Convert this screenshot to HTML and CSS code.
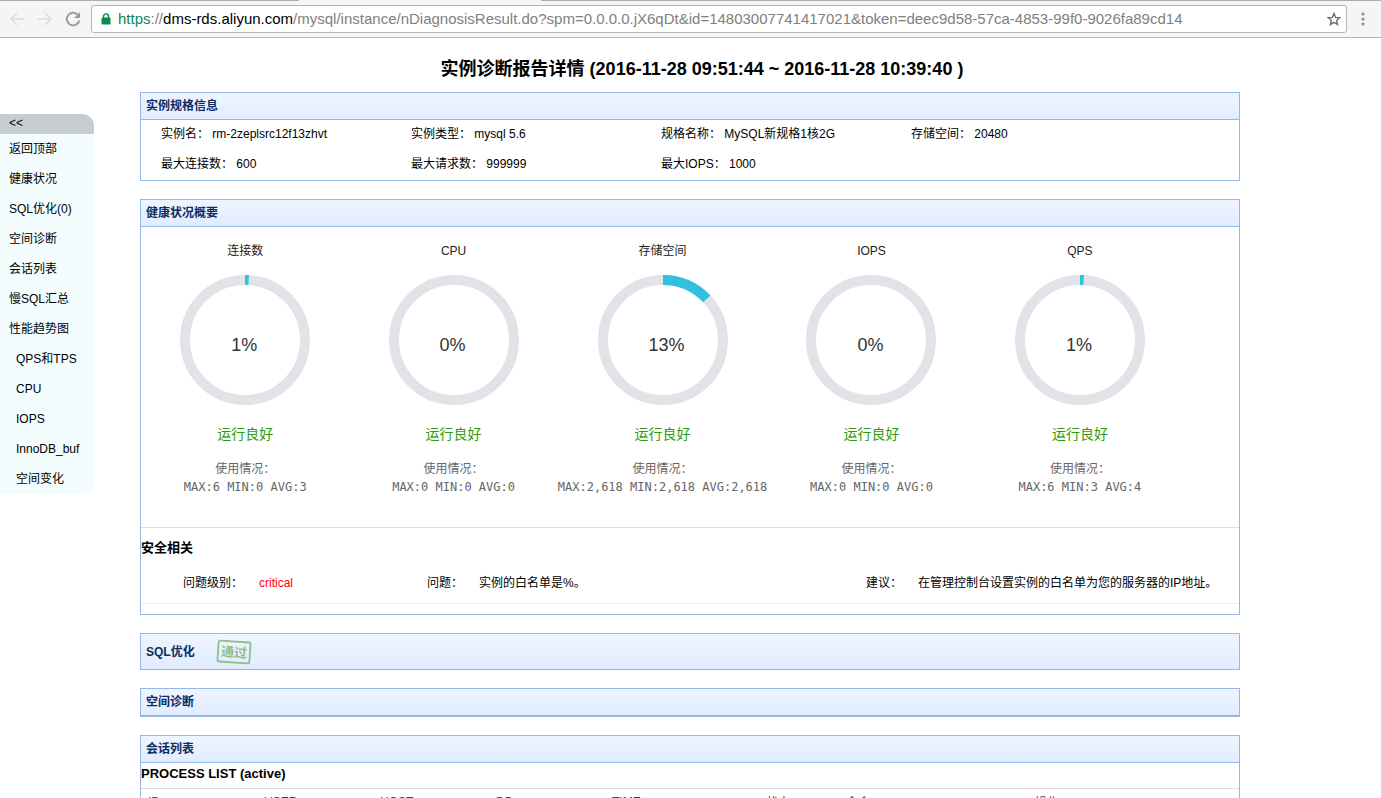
FILE: index.html
```html
<!DOCTYPE html>
<html lang="zh-CN">
<head>
<meta charset="utf-8">
<title>实例诊断报告详情</title>
<link rel="stylesheet" href="styles.css">
</head>
<body>
<div class="window">
  <header class="toolbar">
    <button class="tool" aria-label="后退"><svg width="16" height="16" viewBox="0 0 16 16" fill="none" stroke="#dcdcdc" stroke-width="1.600"><path d="M15 8H2.500M8 2L2 8l6 6"/></svg></button>
    <button class="tool" aria-label="前进"><svg width="16" height="16" viewBox="0 0 16 16" fill="none" stroke="#dcdcdc" stroke-width="1.600"><path d="M1 8h12.500M8 2l6 6-6 6"/></svg></button>
    <button class="tool" aria-label="刷新"><svg width="16" height="16" viewBox="0 0 16 16" fill="none" stroke="#9c9c9c" stroke-width="2"><path d="M14.300 9.500A6.300 6.300 0 1 1 12.600 3.600"/><path d="M15 1v6H9z" fill="#9c9c9c" stroke="none"/></svg></button>
    <div class="address">
      <svg width="10" height="12" viewBox="0 0 10 12"><rect x="0.500" y="4.500" width="9" height="7" rx="1" fill="#0b8a50"/><path d="M2.500 5V3.400a2.500 2.500 0 0 1 5 0V5" fill="none" stroke="#0b8a50" stroke-width="1.400"/></svg>
      <div class="url" role="textbox" aria-label="地址" contenteditable="true" spellcheck="false"><span class="scheme">https</span>://<span class="host">dms-rds.aliyun.com</span>/mysql/instance/nDiagnosisResult.do?spm=0.0.0.0.jX6qDt&amp;id=14803007741417021&amp;token=deec9d58-57ca-4853-99f0-9026fa89cd14</div>
      <button class="star" aria-label="收藏"><svg width="14" height="14" viewBox="0 0 14 14" fill="none" stroke="#6e6e6e" stroke-width="1.400"><path d="M7 1.500l1.600 3.900 4.200.3-3.200 2.700 1 4.100L7 10.300l-3.600 2.200 1-4.100L1.200 5.700l4.200-.3z"/></svg></button>
    </div>
    <button class="more" aria-label="菜单"><svg width="4" height="14" viewBox="0 0 4 14" fill="#8f8f8f"><circle cx="2" cy="2" r="1.600"/><circle cx="2" cy="7" r="1.600"/><circle cx="2" cy="12" r="1.600"/></svg></button>
  </header>
  <div class="page">
    <div class="side">
      <nav class="menu">
        <button class="collapse">&lt;&lt;</button>
        <ul class="links">
          <li><a href="#top">返回顶部</a></li>
          <li><a href="#health">健康状况</a></li>
          <li><a href="#sql">SQL优化(0)</a></li>
          <li><a href="#space">空间诊断</a></li>
          <li><a href="#session">会话列表</a></li>
          <li><a href="#slow">慢SQL汇总</a></li>
          <li><a href="#trend">性能趋势图</a></li>
          <li class="sub"><a href="#qps">QPS和TPS</a></li>
          <li class="sub"><a href="#cpu">CPU</a></li>
          <li class="sub"><a href="#iops">IOPS</a></li>
          <li class="sub"><a href="#buf">InnoDB_buf</a></li>
          <li class="sub"><a href="#change">空间变化</a></li>
        </ul>
      </nav>
    </div>
    <main class="report" id="top">
      <h1 class="title">实例诊断报告详情 (2016-11-28 09:51:44 ~ 2016-11-28 10:39:40 )</h1>

      <section class="panel">
        <h2 class="head">实例规格信息</h2>
        <div class="specs">
          <p>实例名： rm-2zeplsrc12f13zhvt</p>
          <p>实例类型： mysql 5.6</p>
          <p>规格名称： MySQL新规格1核2G</p>
          <p>存储空间： 20480</p>
          <p>最大连接数： 600</p>
          <p>最大请求数： 999999</p>
          <p>最大IOPS： 1000</p>
        </div>
      </section>

      <section class="panel" id="health">
        <h2 class="head">健康状况概要</h2>
        <div class="gauges">
          <div class="gauge">
            <h3 class="name">连接数</h3>
            <div class="ring"><svg viewBox="0 0 130 130"><circle class="track" cx="65" cy="65" r="60"/><circle class="arc" cx="65" cy="65" r="60" pathLength="100" stroke-dasharray="1 99"/></svg><span class="value">1%</span></div>
            <p class="state">运行良好</p>
            <p class="usage">使用情况：<br>MAX:6 MIN:0 AVG:3</p>
          </div>
          <div class="gauge">
            <h3 class="name">CPU</h3>
            <div class="ring"><svg viewBox="0 0 130 130"><circle class="track" cx="65" cy="65" r="60"/></svg><span class="value">0%</span></div>
            <p class="state">运行良好</p>
            <p class="usage">使用情况：<br>MAX:0 MIN:0 AVG:0</p>
          </div>
          <div class="gauge">
            <h3 class="name">存储空间</h3>
            <div class="ring"><svg viewBox="0 0 130 130"><circle class="track" cx="65" cy="65" r="60"/><circle class="arc" cx="65" cy="65" r="60" pathLength="100" stroke-dasharray="13 87"/></svg><span class="value">13%</span></div>
            <p class="state">运行良好</p>
            <p class="usage">使用情况：<br>MAX:2,618 MIN:2,618 AVG:2,618</p>
          </div>
          <div class="gauge">
            <h3 class="name">IOPS</h3>
            <div class="ring"><svg viewBox="0 0 130 130"><circle class="track" cx="65" cy="65" r="60"/></svg><span class="value">0%</span></div>
            <p class="state">运行良好</p>
            <p class="usage">使用情况：<br>MAX:0 MIN:0 AVG:0</p>
          </div>
          <div class="gauge">
            <h3 class="name">QPS</h3>
            <div class="ring"><svg viewBox="0 0 130 130"><circle class="track" cx="65" cy="65" r="60"/><circle class="arc" cx="65" cy="65" r="60" pathLength="100" stroke-dasharray="1 99"/></svg><span class="value">1%</span></div>
            <p class="state">运行良好</p>
            <p class="usage">使用情况：<br>MAX:6 MIN:3 AVG:4</p>
          </div>
        </div>
        <div class="safety">
          <h3 class="subtitle">安全相关</h3>
          <dl class="issue">
            <dt>问题级别：</dt><dd class="critical">critical</dd>
            <dt>问题：</dt><dd>实例的白名单是%。</dd>
            <dt>建议：</dt><dd>在管理控制台设置实例的白名单为您的服务器的IP地址。</dd>
          </dl>
        </div>
      </section>

      <section class="panel" id="sql">
        <h2 class="head head-tall">SQL优化
          <svg class="stamp" width="36" height="26" viewBox="0 0 36 26"><g transform="rotate(4 18 13)"><rect x="2" y="2.500" width="32" height="21" rx="2" fill="none" stroke="#8fbf88" stroke-width="1.800"/><text x="18" y="18" text-anchor="middle">通过</text></g></svg>
        </h2>
      </section>

      <section class="panel" id="space">
        <h2 class="head">空间诊断</h2>
      </section>

      <section class="panel" id="session">
        <h2 class="head">会话列表</h2>
        <h3 class="list-title">PROCESS LIST (active)</h3>
        <table class="processes">
          <thead><tr><th>ID</th><th>USER</th><th>HOST</th><th>DB</th><th>TIME</th><th class="status">状态</th><th class="command">命令</th><th class="action">操作</th></tr></thead>
        </table>
      </section>
    </main>
  </div>
</div>
</body>
</html>
```
FILE: styles.css
```css
* { box-sizing: border-box; }
body {
  margin: 0;
  background: #fff;
  color: #000;
  font: 12px/18px "Liberation Sans", "Noto Sans CJK SC", sans-serif;
}
h1, h2, h3, p, ul, dl, dd { margin: 0; padding: 0; }
button { border: 0; padding: 0; background: none; font: inherit; color: inherit; }
.window { height: 100vh; overflow: hidden; display: flex; flex-direction: column; }

.toolbar {
  flex: none;
  display: flex;
  align-items: center;
  height: 38px;
  padding: 0 14px 0 9px;
  background: linear-gradient(90deg, #adadad 299px, #f5f5f5 299px, #f5f5f5 541px, #adadad 541px) top / 100% 1px no-repeat #f5f5f5;
  border-bottom: 1px solid #b5b5b5;
}
.tool { display: flex; width: 16px; margin-right: 12px; }
.tool:nth-child(3) { margin: 0 10px 0 0; }
.address {
  flex: 1;
  min-width: 0;
  display: flex;
  align-items: center;
  height: 28px;
  padding: 0 5px 0 9px;
  background: #fff;
  border: 1px solid #b5b5b5;
  border-radius: 3px;
}
.url { flex: 1; min-width: 0; margin-left: 7px; overflow: hidden; white-space: nowrap; font-size: 15px; line-height: 20px; color: #808080; }
.scheme { color: #0b8a50; }
.host { color: #000; }
.star { display: flex; }
.more { display: flex; justify-content: center; width: 8px; margin-left: 12px; }

.page { flex: 1; min-height: 0; display: flex; align-items: flex-start; }
.side { flex: none; width: 140px; padding-top: 76px; }
.menu { width: 94px; border-radius: 0 12px 12px 0; overflow: hidden; background: #f3fdfd; }
.collapse { display: block; width: 100%; height: 20px; padding: 0 9px 2px; background: #c6ccd2; text-align: left; }
.links { list-style: none; }
.links li { padding-left: 9px; line-height: 30px; }
.links .sub { padding-left: 16px; }
.links a { color: #000; text-decoration: none; }

.report { flex: 1; min-width: 0; padding-right: 141px; }
.title { padding: 19px 0 11px 24px; text-align: center; font-size: 18px; line-height: 24px; }
.panel { margin-bottom: 18px; border: 1px solid #95b8e7; }
.head {
  display: flex;
  align-items: center;
  height: 27px;
  padding: 0 5px;
  background: linear-gradient(#eff5ff, #e0ecff);
  border-bottom: 1px solid #95b8e7;
  color: #0e2d5f;
  font-size: 12px;
}
.head-tall { height: 35px; border-bottom: 0; }
.stamp { margin-left: 21px; }
.stamp text { font: bold 13px "Noto Sans CJK SC", sans-serif; fill: #8fbf88; }
.specs { display: grid; grid-template-columns: 250fr 250fr 250fr 328fr; padding-left: 20px; }
.specs p { padding-bottom: 2px; line-height: 28px; }

.gauges { display: grid; grid-template-columns: repeat(5, 1fr); width: 95%; padding: 15px 0 31px; text-align: center; }
.gauge { display: flex; flex-direction: column; align-items: center; }
.name { font-size: 12px; font-weight: normal; color: #222; }
.ring { display: grid; width: 130px; height: 130px; margin: 15px 0 19px; }
.ring svg, .value { grid-area: 1 / 1; }
.ring circle { fill: none; stroke-width: 10; }
.track { stroke: #e2e3e9; }
.arc { stroke: #31c0dd; transform: rotate(-90deg); transform-origin: center; }
.value { padding: 58px 0 0 51px; text-align: left; font-size: 18px; line-height: 24px; color: #333; }
.state { font-size: 14px; line-height: 20px; color: #2f9a0e; }
.usage { margin-top: 16px; color: #666; font-family: "DejaVu Sans Mono", "Noto Sans CJK SC", monospace; white-space: nowrap; }

.safety { margin-bottom: 10px; border-top: 1px solid #ddd; border-bottom: 1px solid #eee; }
.subtitle { padding: 10px 0; font-size: 13px; line-height: 20px; }
.issue { display: grid; grid-template-columns: 76px 168fr 52px 387fr 52px 321fr; padding: 5px 0 10px 42px; line-height: 20px; white-space: nowrap; }
.critical { color: #f00; }

.list-title { padding: 1px 0 4px; font-size: 13px; line-height: 20px; }
.processes { width: 100%; table-layout: fixed; border-collapse: collapse; border-top: 1px solid #ddd; }
.processes th { width: 116px; padding: 4px 7px; text-align: left; vertical-align: top; font-weight: normal; line-height: 18px; color: #444; }
.processes .status, .processes .command, .processes .action { padding: 5px 0 3px; text-align: center; }
.processes .status { width: 114px; }
.processes .command { width: 46px; }
.processes .action { width: auto; padding-right: 26px; }
```
